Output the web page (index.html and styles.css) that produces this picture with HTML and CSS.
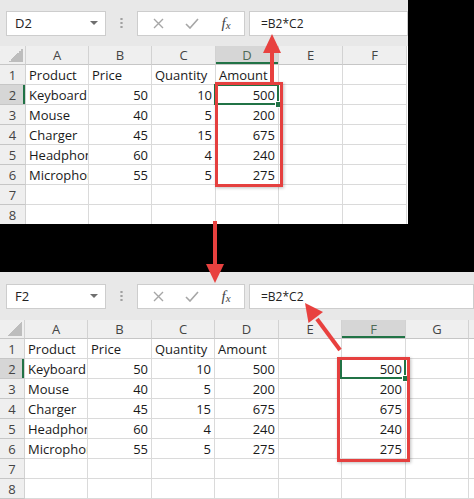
FILE: index.html
```html
<!DOCTYPE html>
<html lang="en">
<head>
  <meta charset="UTF-8">
  <meta name="viewport" content="width=device-width, initial-scale=1.0">
  <title>Excel Formula Copy</title>
  <link rel="stylesheet" href="styles.css">
</head>
<body>
  <div class="shot shot-top">
    <div class="toolbar">
      <div class="namebox"><span>D2</span><span class="caret"></span></div>
      <div class="grip"></div>
      <div class="fxbox">
        <span class="slot"><svg width="11" height="11" viewBox="0 0 11 11"><path d="M1 1L10 10M10 1L1 10" stroke="#a6a6a6" stroke-width="1.4" fill="none"/></svg></span>
        <span class="slot"><svg width="14" height="11" viewBox="0 0 14 11"><path d="M1 6L5 10L13 1" stroke="#a6a6a6" stroke-width="1.6" fill="none"/></svg></span>
        <span class="slot fx"><i>f</i><i class="fx-x">x</i></span>
      </div>
      <div class="formula">=B2*C2</div>
    </div>
    <div class="sheet" id="sheet-top"></div>
    <div class="mark mark-top"></div>
  </div>

  <div class="shot shot-bottom">
    <div class="toolbar">
      <div class="namebox"><span>F2</span><span class="caret"></span></div>
      <div class="grip"></div>
      <div class="fxbox">
        <span class="slot"><svg width="11" height="11" viewBox="0 0 11 11"><path d="M1 1L10 10M10 1L1 10" stroke="#a6a6a6" stroke-width="1.4" fill="none"/></svg></span>
        <span class="slot"><svg width="14" height="11" viewBox="0 0 14 11"><path d="M1 6L5 10L13 1" stroke="#a6a6a6" stroke-width="1.6" fill="none"/></svg></span>
        <span class="slot fx"><i>f</i><i class="fx-x">x</i></span>
      </div>
      <div class="formula">=B2*C2</div>
    </div>
    <div class="sheet" id="sheet-bottom"></div>
    <div class="mark mark-bottom"></div>
  </div>

  <!-- annotation arrows -->
  <svg class="arrows" width="474" height="499" viewBox="0 0 474 499">
    <g fill="#e8413f" stroke="#e8413f">
      <line x1="272" y1="82" x2="272" y2="50" stroke-width="4"/>
      <polygon points="272,34 263,53 281,53" stroke="none"/>
      <line x1="215" y1="221" x2="215" y2="267" stroke-width="4"/>
      <polygon points="215,283 206,264 224,264" stroke="none"/>
      <line x1="340" y1="350" x2="317" y2="319" stroke-width="4"/>
      <polygon points="305,303 323,312 308.5,323" stroke="none"/>
    </g>
  </svg>

  <script>
    var table = [
      ["Product", "Price", "Quantity", "Amount"],
      ["Keyboard", 50, 10, 500],
      ["Mouse", 40, 5, 200],
      ["Charger", 45, 15, 675],
      ["Headphones", 60, 4, 240],
      ["Microphone", 55, 5, 275]
    ];

    function fillSheet(id, letters, rows, selCol) {
      var sheet = document.getElementById(id);
      var corner = document.createElement("div");
      corner.className = "cell head corner";
      sheet.appendChild(corner);
      letters.forEach(function (l, i) {
        var h = document.createElement("div");
        h.className = "cell head" + (i === selCol ? " on" : "");
        h.textContent = l;
        sheet.appendChild(h);
      });
      for (var r = 0; r < 8; r++) {
        var rh = document.createElement("div");
        rh.className = "cell head row-head" + (r === 1 ? " on" : "");
        rh.textContent = r + 1;
        sheet.appendChild(rh);
        for (var c = 0; c < letters.length; c++) {
          var v = rows[r] ? rows[r][c] : undefined;
          var cell = document.createElement("div");
          cell.className = "cell";
          if (typeof v === "number") cell.classList.add("num");
          if (r === 1 && c === selCol) cell.classList.add("sel");
          if (v !== undefined && v !== "") cell.textContent = v;
          sheet.appendChild(cell);
        }
      }
    }

    fillSheet("sheet-top", ["A", "B", "C", "D", "E", "F"], table, 3);

    // last column is only a sliver at the window edge, its letter is out of view
    var copied = table.map(function (row, i) {
      return i === 0 ? row : row.concat(["", row[3]]);
    });
    fillSheet("sheet-bottom", ["A", "B", "C", "D", "E", "F", "G", ""], copied, 5);
  </script>
</body>
</html>
```

FILE: styles.css
```css
body {
  margin: 0;
  width: 474px;
  height: 499px;
  position: relative;
  overflow: hidden;
  background-color: #000000;
  font-family: "Open Sans", sans-serif;
}

.shot {
  position: relative;
  overflow: hidden;
  background-color: #e8e8e8;
}

.shot-top {
  width: 408px;
  height: 224px;
}

.shot-bottom {
  width: 474px;
  height: 227px;
  margin-top: 48px;
}

.toolbar {
  display: flex;
  align-items: center;
  height: 46px;
  padding-left: 6px;
  box-sizing: border-box;
}

.shot-bottom .toolbar {
  height: 48px;
}

.namebox,
.fxbox,
.formula {
  height: 25px;
  background-color: #ffffff;
  border: 1px solid #cdcdcd;
  box-sizing: border-box;
  display: flex;
  align-items: center;
}

.namebox {
  width: 100px;
  justify-content: space-between;
  padding: 0 7px 0 8px;
  font-size: 13px;
  color: #222;
}

.caret {
  width: 0;
  height: 0;
  border-left: 4px solid transparent;
  border-right: 4px solid transparent;
  border-top: 4px solid #6f6f6f;
}

.grip {
  width: 3px;
  height: 12px;
  margin: 0 14px;
  background: radial-gradient(circle, #a0a0a0 1px, transparent 1.3px) 0 0 / 3px 4px;
}

.fxbox {
  width: 108px;
  padding-left: 3px;
}

.slot {
  width: 34px;
  display: flex;
  justify-content: center;
  align-items: center;
}

.fx {
  font-family: "Liberation Serif", serif;
  font-size: 15px;
  color: #444;
}

.fx-x {
  font-size: 11px;
  margin-top: 3px;
}

.formula {
  flex: 1;
  margin-left: 4px;
  padding-left: 11px;
  font-size: 12px;
  color: #222;
}

.sheet {
  display: grid;
  grid-template-rows: 19px repeat(8, 20px);
  background-color: #ffffff;
}

.shot-top .sheet {
  grid-template-columns: 26px 63px 63px 64px 63px 64px 64px;
}

.shot-bottom .sheet {
  grid-template-columns: 25px 63px 64px 63px 64px 63px 64px 63px 1fr;
}

.cell {
  display: flex;
  align-items: center;
  padding: 0 3px;
  border-right: 1px solid #dadada;
  border-bottom: 1px solid #dadada;
  box-sizing: border-box;
  white-space: nowrap;
  overflow: hidden;
  font-size: 13px;
  color: #1a1a1a;
}

.num {
  justify-content: flex-end;
}

.head {
  justify-content: center;
  padding: 0;
  background-color: #efefef;
  color: #444;
  border-right-color: #d2d2d2;
  border-bottom-color: #c6c6c6;
}

.head.on {
  background-color: #d6d6d6;
  color: #4e6b57;
  box-shadow: inset 0 -2px #217346;
}

.row-head.on {
  box-shadow: inset -2px 0 #217346;
  color: #444;
}

.corner {
  background: linear-gradient(135deg, transparent 50%, #bdbdbd 50%) no-repeat right 2px bottom 2px / 14px 14px, #efefef;
}

.sel {
  position: relative;
  overflow: visible;
  z-index: 1;
}

.sel::after {
  content: "";
  position: absolute;
  top: -1px;
  left: -2px;
  right: -1px;
  bottom: -1px;
  border: 2px solid #217346;
}

.sel::before {
  content: "";
  position: absolute;
  right: -4px;
  bottom: -4px;
  width: 5px;
  height: 5px;
  background-color: #217346;
  border: 1px solid #ffffff;
  z-index: 2;
}

.mark {
  position: absolute;
  border: 3px solid #e5403f;
  box-sizing: border-box;
  box-shadow: 1px 1px 3px rgba(0, 0, 0, 0.25);
  z-index: 3;
}

.mark-top {
  left: 215px;
  top: 82px;
  width: 68px;
  height: 105px;
}

.mark-bottom {
  left: 337px;
  top: 85px;
  width: 73px;
  height: 105px;
}

.arrows {
  position: absolute;
  top: 0;
  left: 0;
  pointer-events: none;
  z-index: 5;
}
```
